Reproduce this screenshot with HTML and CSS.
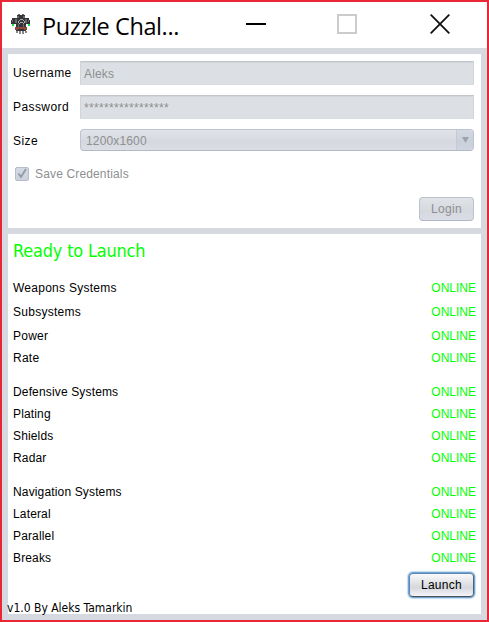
FILE: index.html
```html
<!DOCTYPE html>
<html lang="en">
<head>
<meta charset="utf-8">
<title>Puzzle Challenge</title>
<link rel="stylesheet" href="styles.css">
</head>
<body>
<div class="window">
  <header class="titlebar">
    <svg class="ship" width="20" height="20" viewBox="0 0 20 20" shape-rendering="crispEdges">
      <path fill="#343537" d="M6 1h8v3h4v2h1v4h-4v7H5v-7H0V6h1V4h5z"/>
      <path fill="#66686a" d="M7 0h2v1H7zM11 0h2v1h-2zM6 2h2v2H6zM12 2h2v2h-2zM4 5h2v4H4zM14 5h2v4h-2zM7 10h1v3H7zM12 10h1v3h-1zM1 6h1v2H1zM17 6h1v2h-1z"/>
      <path fill="#a6a8aa" d="M9 5h3v1H9zM8 6h1v1H8zM12 6h1v1h-1zM7 7h1v2H7zM13 7h1v2h-1zM9 8h3v1H9zM8 9h1v1H8zM12 9h1v1h-1z"/>
      <path fill="#8c4939" d="M4 13h12v3h-3v-1H7v1H4z"/>
      <path fill="#0de63c" d="M1 10h2v2H1zM17 10h2v2h-2z"/>
      <path fill="#858789" d="M5 17h2v2H5zM8 17h2v3H8zM11 17h2v3h-2zM14 17h2v2h-2z"/>
    </svg>
    <h1>Puzzle Chal...</h1>
    <div class="controls">
      <svg width="20" height="20"><path d="M0 10h20" stroke="#000" stroke-width="2"/></svg>
      <svg width="20" height="20"><rect x="1" y="1" width="18" height="18" fill="none" stroke="#ccc" stroke-width="2"/></svg>
      <svg width="20" height="20"><path d="M.7.7l18.6 18.6M19.3.7L.7 19.3" stroke="#111" stroke-width="1.8"/></svg>
    </div>
  </header>
  <main>
    <form class="panel login">
      <label class="row"><span>Username</span><span class="field">Aleks</span></label>
      <label class="row"><span>Password</span><span class="field stars">*****************</span></label>
      <label class="row"><span>Size</span><span class="combo"><span>1200x1600</span><span class="arrow"><svg width="7" height="6"><path d="M0 0h7L3.5 6z" fill="#9da3ae"/></svg></span></span></label>
      <label class="save"><span class="check"><svg width="12" height="12"><path d="M2.5 5.5L5 9 10 1" fill="none" stroke="#9199a6" stroke-width="1.8"/></svg></span><span>Save Credentials</span></label>
      <button type="button" class="button" disabled>Login</button>
    </form>
    <section class="panel status">
      <h2>Ready to Launch</h2>
      <dl class="weapons">
        <div><dt>Weapons Systems</dt><dd>ONLINE</dd></div>
        <div><dt>Subsystems</dt><dd>ONLINE</dd></div>
        <div><dt>Power</dt><dd>ONLINE</dd></div>
        <div><dt>Rate</dt><dd>ONLINE</dd></div>
      </dl>
      <dl>
        <div><dt>Defensive Systems</dt><dd>ONLINE</dd></div>
        <div><dt>Plating</dt><dd>ONLINE</dd></div>
        <div><dt>Shields</dt><dd>ONLINE</dd></div>
        <div><dt>Radar</dt><dd>ONLINE</dd></div>
      </dl>
      <dl>
        <div><dt>Navigation Systems</dt><dd>ONLINE</dd></div>
        <div><dt>Lateral</dt><dd>ONLINE</dd></div>
        <div><dt>Parallel</dt><dd>ONLINE</dd></div>
        <div><dt>Breaks</dt><dd>ONLINE</dd></div>
      </dl>
      <button type="button" class="button launch">Launch</button>
      <footer>v1.0 By Aleks Tamarkin</footer>
    </section>
  </main>
</div>
</body>
</html>
```

FILE: styles.css
```css
* { box-sizing: border-box; margin: 0; padding: 0; }
body { font: 12px/16px "Liberation Sans", Arial, sans-serif; letter-spacing: .15px; color: #000; overflow: hidden; }
.window { width: 489px; height: 622px; border: 2px solid #e92736; background: #fff; display: flex; flex-direction: column; }
svg { display: block; }
.titlebar { height: 46px; flex: none; display: flex; align-items: center; padding-left: 9px; }
.ship { margin-top: -2px; }
h1 { font: 23.5px/32px "Open Sans", "Noto Sans", sans-serif; letter-spacing: -.4px; margin: 1px 0 0 11px; white-space: nowrap; }
.controls { display: flex; gap: 71px; margin: -2px 37px 0 auto; }
.controls svg:last-child { margin-left: 2px; }
main { flex: 1; background: #d6d9df; padding: 6px; display: flex; flex-direction: column; gap: 6px; }
.panel { background: #fff; display: flex; flex-direction: column; }
.login { height: 174px; flex: none; padding: 7px 7px 7px 5px; }
.row { display: flex; align-items: center; height: 24px; margin-bottom: 10px; }
.row > span:first-child { width: 67px; letter-spacing: .42px; }
.field { flex: 1; height: 24px; padding: 4px 3px; line-height: 17px; color: #8e8f91; background: #dce0e4; border: 1px solid #d1d5d9; border-top-color: #c2c6ca; border-bottom-color: #d8dce0; box-shadow: inset 0 1px #d2d6da; }
.stars { letter-spacing: .33px; }
.combo { flex: 1; height: 22px; margin-top: -2px; display: flex; justify-content: space-between; align-items: center; padding-left: 5px; color: #8e8f91; border: 1px solid #bec4cf; border-bottom-color: #b3bac6; border-radius: 4px; background: linear-gradient(#e2e4e9, #d5d8de 60%, #dcdee6); overflow: hidden; }
.combo > span:first-child { margin-top: 2px; }
.arrow { width: 17px; height: 20px; display: flex; justify-content: center; align-items: center; border-left: 1px solid #c3cad5; background: linear-gradient(#d3d9e2, #c9d0da 60%, #cfd5e0); }
.save { display: flex; align-items: center; gap: 6px; height: 16px; margin: 3px 0 0 2px; color: #8e8f91; }
.check { width: 14px; height: 14px; border: 1px solid #b5bdc9; border-radius: 2px; background: linear-gradient(#d4dae2, #cbd2dc); }
.button { align-self: flex-end; width: 55px; height: 24px; margin-top: auto; font: inherit; letter-spacing: .3px; color: #8e8f91; border: 1px solid #bdc3cd; border-bottom-color: #b1b8c4; border-radius: 4px; background: linear-gradient(#e0e4e8, #d5d9df 60%, #dbdde6); }
.status { flex: 1; padding: 5px 5px 0; }
h2 { font: 18px/24px "DejaVu Sans Condensed", "DejaVu Sans", sans-serif; letter-spacing: -.2px; color: #0f0; margin-bottom: 14px; }
dl { margin-bottom: 12px; }
dl div { display: flex; justify-content: space-between; height: 22px; line-height: 22px; }
.weapons { letter-spacing: .26px; }
.weapons div:nth-child(-n+2) { height: 24px; }
dd { letter-spacing: 0; color: #0f0; }
dl:last-of-type { margin-bottom: 0; }
.launch { width: 65px; height: 24px; margin: 4px 2px 0 0; color: #000; border-color: #6087b2 #536172 #4c5057 #6087b2; background: linear-gradient(#fafafb, #d4d7dd 62%, #f4f5fa); box-shadow: 0 0 0 1px #73a4d1, 0 0 1px 2px #c0dcf4; }
footer { font: 12px/12px "DejaVu Sans Condensed", "DejaVu Sans", sans-serif; letter-spacing: 0; margin: 5px 0 0 -6px; }
```
